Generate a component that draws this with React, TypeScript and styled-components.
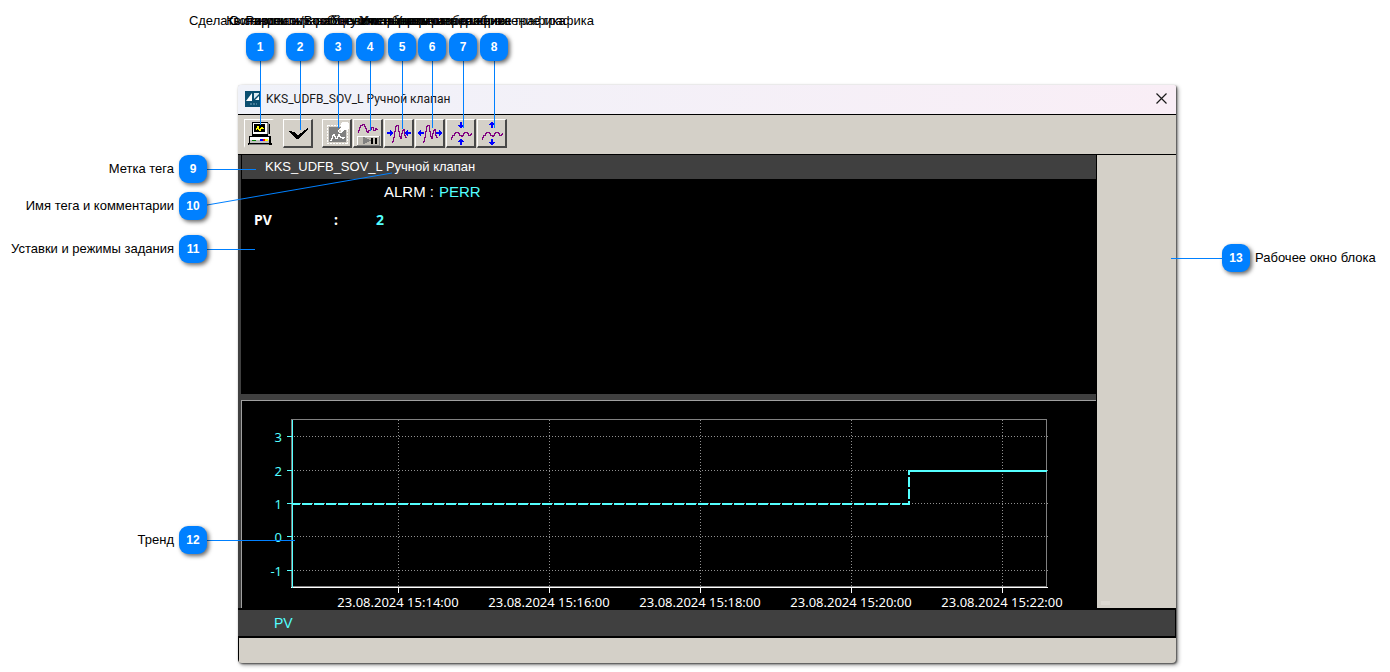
import React, { useEffect, useRef, useState } from "react";
import styled, { createGlobalStyle } from "styled-components";

const SANS = '"Liberation Sans", Arial, sans-serif';
const UI = '"Noto Sans", Tahoma, sans-serif';
const BLUE = "#0080ff";
const CYAN = "#54ffff";
const FACE = "#d4d0c8";
const DARK = "#404040";

const GlobalStyle = createGlobalStyle`
  * { box-sizing: border-box; }
  body { margin: 0; background: #fff; font-family: ${SANS}; }
`;

const Stage = styled.main`
  position: relative;
  padding: 85px 214px 8px 238px;
`;

/* ---------- block window ---------- */

const Window = styled.section`
  display: flex;
  flex-direction: column;
  background: ${FACE};
  border-radius: 2px 2px 4px 4px;
  overflow: hidden;
  box-shadow: 1px 1px 2px rgba(0, 0, 0, 0.6), 2px 2px 4px rgba(0, 0, 0, 0.4);
`;

const TitleBar = styled.header`
  display: flex;
  align-items: center;
  height: 30px;
  padding: 0 7px 2px;
  gap: 5px;
  background: linear-gradient(90deg, #f0f2f9, #f9eef6);
  border-bottom: 1px solid #000;
`;

const Title = styled.h1`
  flex: 1;
  margin: 0;
  font: 400 12px/16px Roboto, "Segoe UI", sans-serif;
  color: #1a1a1a;
  white-space: nowrap;
`;

const CloseButton = styled.button`
  display: flex;
  padding: 2px;
  border: 0;
  background: none;
`;

const Toolbar = styled.div`
  display: flex;
  gap: 1px;
  height: 40px;
  padding: 4px 6px;
  border-bottom: 1px solid #000;
`;

const ToolButton = styled.button<{ $gap?: boolean; $flat?: boolean }>`
  display: flex;
  width: 30px;
  height: 29px;
  padding: 0;
  margin-right: ${(p) => (p.$gap ? 8 : 0)}px;
  background: ${FACE};
  border-style: solid;
  border-width: 1px 2px 2px 1px;
  border-color: ${(p) => (p.$flat ? `#fff ${FACE} ${FACE} #fff` : "#fff #484848 #484848 #fff")};
`;

const Body = styled.div`
  display: flex;
  background: ${DARK};
`;

const Work = styled.div`
  flex: 1;
  min-width: 0;
  padding-left: 3px;
  border-right: 1px solid #000;
`;

const SidePanel = styled.aside`
  display: flex;
  align-items: flex-end;
  width: 79px;
  padding: 3px 4px;
  background: ${FACE};
`;

const Grip = styled.span`
  width: 9px;
  height: 4px;
  background: #dcd8d1;
`;

const TagHeader = styled.h2`
  margin: 0;
  padding-left: 23px;
  border-left: 1px solid #000;
  font: 400 13px/24px ${SANS};
  color: #fff;
`;

const Faceplate = styled.div`
  height: 215px;
  padding: 4px 13px;
  background: #000;
  color: #fff;
`;

const Alarm = styled.p`
  display: flex;
  gap: 5px;
  margin: 0;
  padding-left: 130px;
  font: 400 15px/18px ${SANS};
`;

const Value = styled.span`
  color: ${CYAN};
`;

const Parameters = styled.dl`
  display: grid;
  grid-template-columns: 80px 42px 1fr;
  margin: 10px 0 0;
  font: 700 14px/18px ${UI};
`;

const Term = styled.dt``;
const Data = styled.dd<{ $value?: boolean }>`
  margin: 0;
  color: ${(p) => (p.$value ? CYAN : "#fff")};
`;

const TrendPanel = styled.div`
  height: 214px;
  border-top: 6px solid ${DARK};
`;

const TrendBox = styled.div`
  height: 208px;
  background: #000;
  border-style: solid;
  border-color: #a0a0a0;
  border-width: 1px 0 0 1px;
`;

const Plot = styled.svg`
  display: block;
  width: 100%;
  height: 207px;
  font: 400 13px ${UI};
`;

const Legend = styled.div`
  padding-left: 36px;
  background: ${DARK};
  border: solid #000;
  border-width: 2px 1px 2px 0;
  font: 400 14px/26px ${SANS};
  color: ${CYAN};
`;

const StatusBar = styled.footer`
  height: 25px;
  border-left: 1px solid #000;
`;

/* ---------- callouts ---------- */

const Badge = styled.span`
  position: relative;
  z-index: 1;
  flex: none;
  width: 28px;
  border-radius: 9px;
  background: ${BLUE};
  box-shadow: 2px 2px 4px rgba(0, 0, 0, 0.6);
  font: 700 12px/28px ${SANS};
  color: #fff;
  text-align: center;
`;

const Caption = styled.span`
  font: 400 13px/16px ${SANS};
  color: #000;
  white-space: nowrap;
`;

const TopCallout = styled.div<{ $x: number }>`
  position: absolute;
  top: 13px;
  left: ${(p) => p.$x}px;
  display: flex;
  flex-direction: column;
  align-items: center;
  gap: 4px;
  width: 0;
`;

const LeftCallout = styled.div<{ $y: number }>`
  position: absolute;
  top: ${(p) => p.$y}px;
  left: 0;
  display: flex;
  align-items: center;
  justify-content: flex-end;
  gap: 5px;
  width: 207px;
`;

const RightCallout = styled.div`
  position: absolute;
  top: 244px;
  right: 0;
  display: flex;
  align-items: center;
  gap: 5px;
  width: 168px;
`;

const VLeader = styled.span<{ $len: number }>`
  width: 1px;
  height: ${(p) => p.$len}px;
  margin-top: -4px;
  background: ${BLUE};
`;

const HLeader = styled.span<{ $len: number; $side: "left" | "right" }>`
  position: absolute;
  top: 14px;
  ${(p) => (p.$side === "left" ? "right: 100%" : "left: 100%")};
  width: ${(p) => p.$len}px;
  height: 1px;
  background: ${BLUE};
`;

const SlantLeader = styled.svg`
  position: absolute;
  left: 100%;
  bottom: 14px;
`;

/* ---------- icons ---------- */

const Glyph = ({ children }: { children: React.ReactNode }) => (
  <svg width="27" height="26" viewBox="1 1 27 26" shapeRendering="crispEdges" fill="none" aria-hidden="true">
    {children}
  </svg>
);

const PURPLE = "#800080";
const ARROW = "#0000ff";

const ComputerIcon = () => (
  <Glyph>
    <path d="M8 3h15v12H8z" fill="#fff" stroke="#000" />
    <path d="M23 4h2v11h-2z" fill="#808080" />
    <path d="M25 5h1v10h-1z" fill="#000" />
    <path d="M10 5h11v8H10z" fill="#000" />
    <path d="M12 11v-2h1v-2h1v3h1v1h1v-2h1v-1h1v1h2" stroke="#ff0" />
    <path d="M8 15h16v2H8z" fill="#000" />
    <path d="M5 17h22v8H5z" fill="#000" />
    <path d="M6 18h19v3H6z" fill="#fff" />
    <path d="M6 21h19v3H6z" fill="#c0c0c0" />
    <path d="M8 21h4v1H8z" fill="#008000" />
    <path d="M16 20h3v2h-3z" fill="#00f" />
    <path d="M19 20h2v2h-2z" fill="#f00" />
    <path d="M21 20h3v2h-3z" fill="#ff0" />
    <path d="M4 24h24v2H4z" fill="#000" />
    <path d="M5 25h20v1H5z" fill="#808080" />
  </Glyph>
);

const CheckIcon = () => (
  <Glyph>
    <path d="M6 12h2l1 1h2l3 3h1l10-7v1l-2 2-8 8h-2l-5-6h-1z" fill="#000" />
  </Glyph>
);

const MarkerIcon = () => (
  <Glyph>
    <path d="M4 5h23v21H4z" fill={FACE} />
    <path d="M5.500 6.500h20v18h-20z" stroke="#fff" strokeDasharray="2 1" />
    <path d="M7 8h17v15H7z" fill="#808080" />
    <path d="M8 21h1v-2h1v-3h1v-1h1v2h1v2h2v-2h1v-2h1v2h1v1h2v1h1v-1h2" stroke="#fff" />
    <path d="M20 3h5l2 2v4l-2 2h-4l-2-2V5z" fill="#fff" />
    <path d="M19 8h2v1h1v2l-3 3h-2l-1-2z" fill="#fff" />
    <path d="M17 11h2v2h-2z" fill={FACE} />
  </Glyph>
);

const PauseIcon = () => (
  <Glyph>
    <path d="M5 14v-3h1v-3h1v-2h2v-1h2v2h1v2h1v3h1v1h1v-2h2v-1h1v-2h2v3h2v-2h1v1h2" stroke={PURPLE} />
    <path d="M4 17h23v10H4z" fill="#808080" />
    <path d="M4 17h22v9H4z" fill="#fff" />
    <path d="M5 18h21v8H5z" fill="#c0bcb4" />
    <path d="M10 18h2v1h2v1h2v1h2v1h-2v1h-2v1h-2v1h-2z" fill="#808080" />
    <path d="M18 19h2v6h-2zM22 19h2v6h-2z" fill="#000" />
  </Glyph>
);

const ArrowRight = ({ x }: { x: number }) => (
  <path d={`M${x} 13h3v-2h1v1h1v1h1v2h-1v1h-1v1h-1v-2h-3z`} fill={ARROW} />
);
const ArrowLeft = ({ x }: { x: number }) => (
  <path d={`M${x} 13h-3v-2h-1v1h-1v1h-1v2h1v1h1v1h1v-2h3z`} fill={ARROW} />
);
const ArrowDown = ({ y }: { y: number }) => (
  <path d={`M14 ${y}h2v3h2v1h-1v1h-1v1h-2v-1h-1v-1h-1v-1h2z`} fill={ARROW} />
);
const ArrowUp = ({ y }: { y: number }) => (
  <path d={`M14 ${y}h2v-3h2v-1h-1v-1h-1v-1h-2v1h-1v1h-1v1h2z`} fill={ARROW} />
);

const TallWave = () => (
  <path
    d="M8.500 24v-2h1v-4h1v-6h1v-5h1v-1h2v6h1v5h1v2h1v-5h1v-3h1v-1h1v6h1v2h1"
    stroke={PURPLE}
  />
);
const LowWave = () => (
  <path
    d="M5 20.500v-2h1v-2h2v-2h1v-1h3v1h1v2h2v1h1v-1h1v-2h1v-1h3v1h1v2h2v-1h1v-1h1"
    stroke={PURPLE}
  />
);

const SqueezeXIcon = () => (
  <Glyph>
    <TallWave />
    <ArrowRight x={3} />
    <ArrowLeft x={27} />
  </Glyph>
);
const StretchXIcon = () => (
  <Glyph>
    <TallWave />
    <ArrowLeft x={9} />
    <ArrowRight x={21} />
  </Glyph>
);
const SqueezeYIcon = () => (
  <Glyph>
    <LowWave />
    <ArrowDown y={3} />
    <ArrowUp y={26} />
  </Glyph>
);
const StretchYIcon = () => (
  <Glyph>
    <LowWave />
    <ArrowUp y={9} />
    <ArrowDown y={20} />
  </Glyph>
);

const LogoIcon = () => (
  <svg width="16" height="16" viewBox="0 0 16 16" aria-hidden="true">
    <path d="M0 0h16v16H0z" fill="#0b4f70" />
    <path d="M7 2v8H1z" fill="#fff" />
    <path d="M9 2h5v8H9z" fill="#dcebf2" />
    <path d="M9 8l5-5v7H9z" fill="#0b4f70" />
    <path d="M10 9l4-4v4z" fill="#fff" />
    <path d="M5 13h7" stroke="#7fa9bd" strokeWidth="1" strokeDasharray="2 1" />
  </svg>
);

/* ---------- trend ---------- */

const levels = [
  { label: "3", y: 35 },
  { label: "2", y: 69 },
  { label: "1", y: 102 },
  { label: "0", y: 135 },
  { label: "-1", y: 169 },
];
const times = ["15:14:00", "15:16:00", "15:18:00", "15:20:00", "15:22:00"];

function Trend() {
  const ref = useRef<HTMLDivElement>(null);
  const [width, setWidth] = useState(854);

  useEffect(() => {
    const box = ref.current;
    if (!box) return;
    const observer = new ResizeObserver(() => setWidth(box.clientWidth));
    observer.observe(box);
    return () => observer.disconnect();
  }, []);

  const left = 50;
  const right = width - 50;
  const span = right - left;
  const at = (part: number) => Math.round(left + span * part);
  const step = at(617 / 754);

  return (
    <TrendBox ref={ref}>
      <Plot role="img" aria-label="Тренд PV">
        <g shapeRendering="crispEdges">
          <rect x={left} y={18} width={span} height={168} fill="#808080" />
          <rect x={left} y={19} width={span} height={166} fill="#000" />
          <rect x={left - 1} y={18} width={1} height={169} fill="#808080" />
          <rect x={right} y={18} width={1} height={169} fill="#808080" />
          {levels.map((l) => (
            <g key={l.label} strokeWidth="1">
              <path d={`M${left + 2} ${l.y + 0.5}H${right + 2}`} stroke="#909090" strokeDasharray="1 2" />
              <path d={`M${left - 5} ${l.y + 0.5}h5`} stroke={CYAN} />
            </g>
          ))}
          {times.map((t, i) => {
            const x = at((106 + 151 * i) / 754) + 0.5;
            return (
              <g key={t}>
                <path d={`M${x} 19V186`} stroke="#909090" strokeDasharray="1 2" />
                <path d={`M${x} 186v6`} stroke="#fff" />
              </g>
            );
          })}
          <rect x={left - 1} y={186} width={span + 3} height={1} fill="#fff" />
          <rect x={left} y={19} width={1} height={168} fill={CYAN} />
          <path
            d={`M${left} 103H${step}V69`}
            fill="none"
            stroke={CYAN}
            strokeWidth="2"
            strokeDasharray="10 2"
            strokeDashoffset="2"
          />
          <path d={`M${step - 1} 70H${right + 1}`} stroke={CYAN} strokeWidth="2" />
        </g>
        {levels.map((l) => (
          <text key={l.label} x={left - 10} y={l.y + 6} fill={CYAN} textAnchor="end">
            {l.label}
          </text>
        ))}
        {times.map((t, i) => (
          <text key={t} x={at((106 + 151 * i) / 754)} y={206} fill="#fff" textAnchor="middle">
            {`23.08.2024 ${t}`}
          </text>
        ))}
      </Plot>
    </TrendBox>
  );
}

/* ---------- data ---------- */

const tools = [
  { x: 260, len: 64, text: "Сделать снимок экрана", icon: <ComputerIcon />, flat: true, gap: true },
  { x: 300, len: 69, text: "Квитировать сообщения", icon: <CheckIcon />, gap: true },
  { x: 338, len: 67, text: "Разрешить работу с маркером", icon: <MarkerIcon /> },
  { x: 370, len: 70, text: "Остановить/Возобновить обновление графика", icon: <PauseIcon /> },
  { x: 402, len: 68, text: "Увеличить разрешение", icon: <SqueezeXIcon /> },
  { x: 432, len: 67, text: "Уменьшить разрешение", icon: <StretchXIcon /> },
  { x: 463, len: 67, text: "Уменьшить отображение графика", icon: <SqueezeYIcon /> },
  { x: 494, len: 67, text: "Увеличить отображение графика", icon: <StretchYIcon /> },
];

const notes = [
  { n: 9, y: 155, len: 49, text: "Метка тега" },
  { n: 10, y: 192, len: 0, text: "Имя тега и комментарии" },
  { n: 11, y: 235, len: 48, text: "Уставки и режимы задания" },
  { n: 12, y: 526, len: 88, text: "Тренд" },
];

export default function App() {
  return (
    <>
      <GlobalStyle />
      <Stage>
        <Window>
          <TitleBar>
            <LogoIcon />
            <Title>KKS_UDFB_SOV_L Ручной клапан</Title>
            <CloseButton type="button" aria-label="Закрыть">
              <svg width="11" height="11" viewBox="0 0 11 11" aria-hidden="true">
                <path d="M0.500 0.500l10 10M10.500 0.500l-10 10" stroke="#1a1a1a" strokeWidth="1.200" />
              </svg>
            </CloseButton>
          </TitleBar>
          <Toolbar role="toolbar">
            {tools.map((t) => (
              <ToolButton key={t.x} type="button" aria-label={t.text} $gap={t.gap} $flat={t.flat}>
                {t.icon}
              </ToolButton>
            ))}
          </Toolbar>
          <Body>
            <Work>
              <TagHeader>KKS_UDFB_SOV_L Ручной клапан</TagHeader>
              <Faceplate>
                <Alarm>
                  <span>ALRM :</span>
                  <Value>PERR</Value>
                </Alarm>
                <Parameters>
                  <Term>PV</Term>
                  <Data>:</Data>
                  <Data $value>2</Data>
                </Parameters>
              </Faceplate>
              <TrendPanel>
                <Trend />
              </TrendPanel>
            </Work>
            <SidePanel>
              <Grip />
            </SidePanel>
          </Body>
          <Legend>PV</Legend>
          <StatusBar />
        </Window>

        {tools.map((t, i) => (
          <TopCallout key={t.x} $x={t.x}>
            <Caption>{t.text}</Caption>
            <Badge>{i + 1}</Badge>
            <VLeader $len={t.len} />
          </TopCallout>
        ))}
        {notes.map((c) => (
          <LeftCallout key={c.n} $y={c.y}>
            <Caption>{c.text}</Caption>
            <Badge>{c.n}</Badge>
            {c.len > 0 ? (
              <HLeader $side="right" $len={c.len} />
            ) : (
              <SlantLeader width="186" height="34" viewBox="0 0 186 34" aria-hidden="true">
                <path d="M0 33L185 1" stroke={BLUE} />
              </SlantLeader>
            )}
          </LeftCallout>
        ))}
        <RightCallout>
          <Badge>13</Badge>
          <Caption>Рабочее окно блока</Caption>
          <HLeader $side="left" $len={51} />
        </RightCallout>
      </Stage>
    </>
  );
}
